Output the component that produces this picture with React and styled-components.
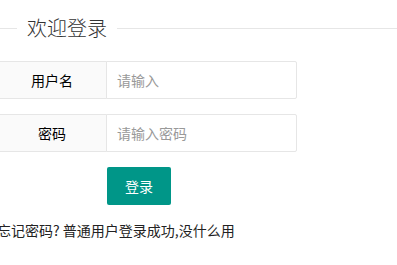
import styled, { createGlobalStyle } from "styled-components"

const GlobalStyle = createGlobalStyle`
    html, body {
        margin: 0;
        padding: 0;
        background: #fff;
        overflow: hidden;
    }
    body {
        font-family: "Noto Sans CJK SC", "Noto Sans", sans-serif;
        font-size: 14px;
        color: #333;
    }
`

const Page = styled.div`
    margin-left: -3px;
    padding-top: 14px;
`

const TitleBar = styled.div`
    display: flex;
    align-items: center;
    height: 28px;
    margin-bottom: 19px;
`

const TitleLine = styled.div`
    height: 1px;
    background-color: #e6e6e6;
    width: ${(p) => (p.$grow ? "auto" : "20px")};
    flex: ${(p) => (p.$grow ? 1 : "none")};
`

const TitleText = styled.span`
    padding: 0 10px;
    font-size: 20px;
    font-weight: 300;
    line-height: 28px;
    color: #333;
`

const Form = styled.form`
    width: 300px;
`

const FormItem = styled.div`
    display: flex;
    height: 38px;
    margin-bottom: 15px;
`

const FormLabel = styled.label`
    box-sizing: border-box;
    width: 110px;
    height: 38px;
    line-height: 36px;
    text-align: center;
    background-color: #fafafa;
    border: 1px solid #e6e6e6;
    border-radius: 2px 0 0 2px;
    color: #000;
    font-size: 14px;
`

const FormInput = styled.input`
    box-sizing: border-box;
    flex: 1;
    height: 38px;
    margin-left: -1px;
    padding: 0 10px;
    border: 1px solid #e6e6e6;
    border-radius: 0 2px 2px 0;
    font-family: inherit;
    font-size: 14px;
    color: #333;
    outline: none;
    &::placeholder {
        color: #999;
    }
`

const ButtonRow = styled.div`
    padding-left: 110px;
    margin-bottom: 15px;
`

const SubmitButton = styled.button`
    height: 38px;
    padding: 0 18px;
    border: none;
    border-radius: 2px;
    background-color: #009688;
    color: #fff;
    font-family: inherit;
    font-size: 14px;
    cursor: pointer;
`

const Hint = styled.p`
    margin: 0;
    line-height: 20px;
    color: #222;
    white-space: nowrap;
`

function App() {
    return (
        <>
            <GlobalStyle />
            <Page>
                <TitleBar>
                    <TitleLine />
                    <TitleText>欢迎登录</TitleText>
                    <TitleLine $grow />
                </TitleBar>
                <Form onSubmit={(e) => e.preventDefault()}>
                    <FormItem>
                        <FormLabel htmlFor="username">用户名</FormLabel>
                        <FormInput id="username" type="text" placeholder="请输入" />
                    </FormItem>
                    <FormItem>
                        <FormLabel htmlFor="password">密码</FormLabel>
                        <FormInput id="password" type="password" placeholder="请输入密码" />
                    </FormItem>
                    <ButtonRow>
                        <SubmitButton type="submit">登录</SubmitButton>
                    </ButtonRow>
                </Form>
                <Hint>忘记密码? 普通用户登录成功,没什么用</Hint>
            </Page>
        </>
    )
}

export default App
